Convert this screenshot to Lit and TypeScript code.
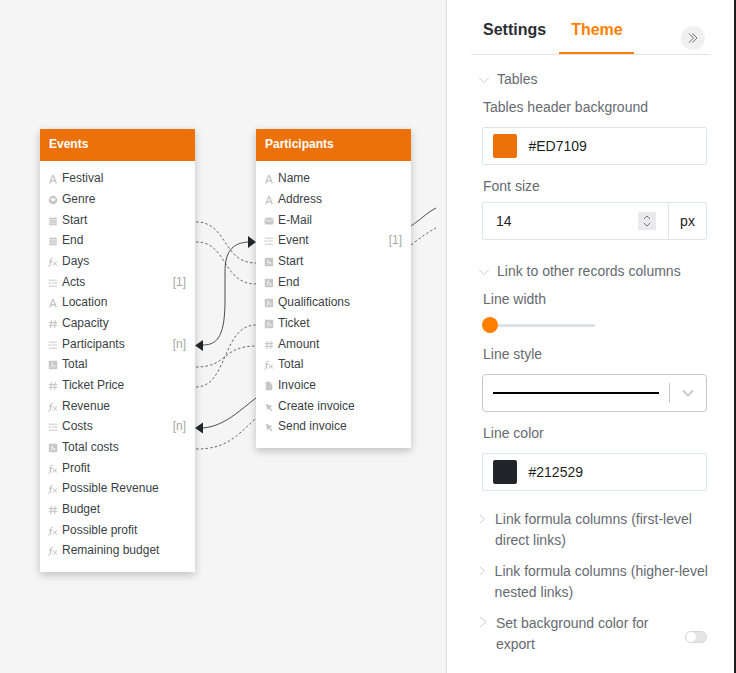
import { LitElement, html, css, svg } from "lit";
import { customElement } from "lit/decorators.js";

type Row = [string, string, string?];

const events: Row[] = [
  ["a", "Festival"], ["s", "Genre"], ["c", "Start"], ["c", "End"], ["f", "Days"],
  ["l", "Acts", "[1]"], ["a", "Location"], ["n", "Capacity"], ["l", "Participants", "[n]"],
  ["q", "Total"], ["n", "Ticket Price"], ["f", "Revenue"], ["l", "Costs", "[n]"],
  ["q", "Total costs"], ["f", "Profit"], ["f", "Possible Revenue"], ["n", "Budget"],
  ["f", "Possible profit"], ["f", "Remaining budget"],
];
const participants: Row[] = [
  ["a", "Name"], ["a", "Address"], ["m", "E-Mail"], ["l", "Event", "[1]"], ["q", "Start"],
  ["q", "End"], ["q", "Qualifications"], ["q", "Ticket"], ["n", "Amount"], ["f", "Total"],
  ["d", "Invoice"], ["b", "Create invoice"], ["b", "Send invoice"],
];

function icon(k: string) {
  const g = "#c6c6c6";
  switch (k) {
    case "a":
      return html`<svg class="ic" viewBox="0 0 10 10"><path d="M1 9.2 4.2 1h1.6L9 9.2H7.4L6.8 7.4H3.2L2.6 9.2ZM3.7 6h2.6L5 2.6Z" fill="${g}" fill-rule="evenodd"/></svg>`;
    case "s":
      return html`<svg class="ic" viewBox="0 0 10 10"><circle cx="5" cy="5" r="4.3" fill="${g}"/><path d="M1.8 3.4h6.4L5 6.8Z" fill="#fff"/></svg>`;
    case "c":
      return html`<svg class="ic" viewBox="0 0 10 10"><path d="M1.2 2h7.6v1.6H1.2ZM1.2 4.3h7.6v5H1.2ZM2.6 1h1v1.4h-1ZM6.4 1h1v1.4h-1Z" fill="${g}"/><path d="M1.2 6h7.6M1.2 7.7h7.6" stroke="#fff" stroke-width=".5"/></svg>`;
    case "f":
      return html`<svg class="ic" viewBox="0 0 10 10"><path d="M4.8 1.2C3.5 1 3.1 1.8 2.9 3L2.1 8C1.9 9 1.4 9.400.3 9.100M1.2 4.100h2.800" fill="none" stroke="#bcbcbc" stroke-width="1"/><path d="M4.800 4.400 9 8.600M9 4.400 4.800 8.600" stroke="#bcbcbc" stroke-width="1"/></svg>`;
    case "l":
      return html`<svg class="ic" viewBox="0 0 10 10"><path d="M.8 2.200h8.400M3.600 5h5.600M.8 8.200h8.400" stroke="#c2c2c2" stroke-width=".9"/><path d="M.8 3.700 2.800 5 .8 6.300Z" fill="#c2c2c2"/></svg>`;
    case "n":
      return html`<svg class="ic" viewBox="0 0 10 10"><path d="M3.400 1 2.800 9M7.200 1 6.600 9M.9 3.600h8.200M.9 6.500h8.200" stroke="${g}" stroke-width="1.100"/></svg>`;
    case "q":
      return html`<svg class="ic" viewBox="0 0 10 10"><rect x=".8" y=".8" width="8.400" height="8.400" rx="1" fill="${g}"/><path d="M5.200 2.400C4.400 2.300 4.200 2.800 4.100 3.400L3.600 6.800C3.500 7.500 3.100 7.700 2.500 7.600M3 4.400h2M5 5 7.400 7.400M7.400 5 5 7.400" fill="none" stroke="#fff" stroke-width=".7"/></svg>`;
    case "m":
      return html`<svg class="ic" viewBox="0 0 10 10"><rect x=".6" y="1.800" width="8.800" height="6.600" rx=".8" fill="${g}"/><path d="M1 3 5 5.600 9 3" fill="none" stroke="#fff" stroke-width=".8"/></svg>`;
    case "d":
      return html`<svg class="ic" viewBox="0 0 10 10"><path d="M1.800.8h4.300l2.100 2.200v6.200H1.800Z" fill="${g}"/><path d="M6 .8V3.200h2.200" fill="#e6e6e6"/></svg>`;
    default:
      return html`<svg class="ic" viewBox="0 0 10 10"><path d="M1.600 1.400 8.600 4.400 6.200 5.400 8.400 8.600 7.400 9.400 5 6.400 3.600 8.600Z" fill="${g}"/></svg>`;
  }
}

const ChevOpen = html`<svg class="chev open" viewBox="0 0 12 12"><path d="M1.200 3.600 6 8.600 10.800 3.600" fill="none" stroke="#cfcfcf" stroke-width="1"/></svg>`;
const ChevSmall = html`<svg class="chev small" viewBox="0 0 12 12"><path d="M3 2 7.600 6 3 10" fill="none" stroke="#cfcfcf" stroke-width="1"/></svg>`;
const ChevBig = html`<svg class="chev big" viewBox="0 0 12 12"><path d="M3 1 9 6 3 11" fill="none" stroke="#cfcfcf" stroke-width="1"/></svg>`;

@customElement("app-root")
export class AppRoot extends LitElement {
  static styles = css`
    :host {
      display: block;
      width: 736px;
      height: 673px;
      overflow: hidden;
      font-family: "Liberation Sans", Arial, sans-serif;
      background: #f5f5f5;
    }
    .page { display: flex; width: 736px; height: 673px; }
    .canvas { position: relative; flex: none; width: 446px; height: 673px; background: #f5f5f5; overflow: hidden; }
    .links { position: absolute; left: 0; top: 0; width: 446px; height: 673px; z-index: 2; pointer-events: none; }
    .table { position: absolute; top: 129px; width: 155px; background: #fff; box-shadow: 0 3px 8px rgba(0,0,0,.22); }
    .t1 { left: 40px; height: 443px; }
    .t2 { left: 256px; height: 319px; }
    .head { height: 32px; background: #ed7109; color: #fff; font-size: 12px; font-weight: 700; line-height: 30px; padding-left: 9px; }
    .rows { padding-top: 7px; display: flex; flex-direction: column; }
    .row { height: 20.672px; flex: none; display: flex; align-items: center; padding: 0 9px 0 8px; font-size: 12px; color: #3b3f45; }
    .ic { width: 10px; height: 10px; flex: none; margin-right: 4px; margin-top: 2px; }
    .name { flex: 1; white-space: nowrap; }
    .tag { color: #a8a8a8; }

    .panel { flex: none; width: 288px; height: 673px; box-sizing: border-box; background: #fff; border-left: 1px solid #dedede; padding: 0 24px 0 24px; color: #666a70; font-size: 14px; }
    .tabs { display: flex; height: 54px; border-bottom: 1px solid #e2e4e8; position: relative; }
    .tab { font-size: 16px; font-weight: 700; color: #2b2e33; padding: 20px 12px 0 12px; box-sizing: border-box; height: 54px; line-height: 20px; }
    .tab.on { color: #ff8000; border-bottom: 2px solid #ff8000; margin-left: 1px; padding-right: 11px; }
    .collapse { position: absolute; right: 5px; top: 26px; width: 24px; height: 24px; border-radius: 50%; background: #f0f0f0; display: flex; align-items: center; justify-content: center; }
    .collapse svg { width: 12px; height: 12px; }

    .sec { display: flex; align-items: flex-start; line-height: 21px; }
    .chev { width: 12px; height: 12px; flex: none; }
    .chev.open { margin: 5px 7px 0 7px; }
    .chev.small { margin: 4px 6px 0 6px; }
    .nudge .chev.small { margin-right: 5.6px; }
    .chev.big { margin: 3px 7px 0 6px; }
    .s1 { margin-top: 14px; }
    .s1b { margin-top: 21px; }
    .s3 { margin-top: 18px; }
    .s3b { margin-top: 10px; }

    .lab { margin: 11px 0 0 12px; line-height: 21px; }
    .lab.tight { margin-top: 7px; }
    .field { margin: 9px 3px 0 11px; height: 38px; box-sizing: border-box; border: 1px solid #e0e4ec; border-radius: 2px; display: flex; align-items: center; padding-left: 10px; color: #1d1f22; }
    .sw { width: 24px; height: 24px; border-radius: 2px; margin-right: 11.5px; }
    .font { margin-top: 5px; padding: 0; }
    .val { flex: 1; padding: 0 12px 0 13px; display: flex; align-items: center; justify-content: space-between; height: 100%; }
    .spin { width: 18px; height: 18px; background: #e9e9ee; display: flex; align-items: center; justify-content: center; }
    .spin svg { width: 12px; height: 16px; }
    .px { width: 38px; flex: none; box-sizing: border-box; height: 100%; border-left: 1px solid #e0e4ec; display: flex; align-items: center; justify-content: center; }
    .slider { margin: 7px 0 0 11px; height: 16px; width: 113px; position: relative; display: flex; align-items: center; }
    .track { width: 100%; height: 3px; background: #dee2e6; }
    .thumb { position: absolute; left: 0; top: 0; width: 16px; height: 16px; border-radius: 50%; background: #ff8000; }
    .select { margin: 9px 3px 0 11px; height: 38px; box-sizing: border-box; border: 1px solid #c8c8c8; border-radius: 4px; display: flex; align-items: center; padding-left: 10px; }
    .line { width: 166px; height: 2px; background: #000; }
    .sep { width: 1px; height: 20px; background: #c8c8c8; margin-left: 10px; }
    .select svg { width: 12px; height: 12px; margin-left: 12px; }
    .export span { flex: 1; }
    .export { align-items: flex-start; }
    .toggle { flex: none; width: 22px; height: 12px; box-sizing: border-box; border: 1px solid #d6d6d6; background: #e4e4e4; border-radius: 6px; position: relative; margin: 18px 3px 0 12px; }
    .toggle i { position: absolute; left: 0; top: 0; width: 10px; height: 10px; border-radius: 50%; background: #fff; }
    .scroll { flex: none; width: 2px; height: 673px; background: #1c1c1e; }
  `;

  private table(cls: string, title: string, rows: Row[]) {
    return html`<div class="table ${cls}">
      <div class="head">${title}</div>
      <div class="rows">
        ${rows.map(
          ([k, n, t]) => html`<div class="row">${icon(k)}<span class="name">${n}</span>${t ? html`<span class="tag">${t}</span>` : ""}</div>`
        )}
      </div>
    </div>`;
  }

  render() {
    const dash = "2.500 2.200";
    return html`<div class="page">
      <div class="canvas">
        ${this.table("t1", "Events", events)}
        ${this.table("t2", "Participants", participants)}
        <svg class="links" viewBox="0 0 446 673">
          ${svg`
            <g fill="none" stroke="#555" stroke-width=".9">
              <path stroke-dasharray="${dash}" d="M196 222C228 222 222 263 256 263"/>
              <path stroke-dasharray="${dash}" d="M196 242C228 242 222 284 256 284"/>
              <path stroke-dasharray="${dash}" d="M196 367C228 367 222 346 256 346"/>
              <path stroke-dasharray="${dash}" d="M196 387C228 387 222 325 256 325"/>
              <path stroke-dasharray="${dash}" d="M196 449C226 449 236 437 256 418"/>
              <path stroke-dasharray="${dash}" d="M411 245C420 238 428 232 436 228"/>
              <path stroke="#3a3a3a" d="M411 226C420 220 428 212 436 208"/>
              <path stroke="#3a3a3a" d="M203 345C218 345 225 335 225 300V272C225 252 232 243 248 242"/>
              <path stroke="#3a3a3a" d="M203 428C225 426 240 410 256 398"/>
            </g>
            <path d="M195 345.500L203 340V351Z M195 428L203 422.500V433.500Z M256 242L248 236V248Z" fill="#212529"/>
          `}
        </svg>
      </div>
      <div class="panel">
        <div class="tabs">
          <div class="tab">Settings</div>
          <div class="tab on">Theme</div>
          <div class="collapse"><svg viewBox="0 0 12 12"><path d="M2 1.500 6.500 6 2 10.500M5.500 1.500 10 6 5.500 10.500" fill="none" stroke="#6c6c6c" stroke-width="1"/></svg></div>
        </div>
        <div class="sec s1">${ChevOpen}<span>Tables</span></div>
        <div class="lab tight">Tables header background</div>
        <div class="field"><div class="sw" style="background:#ED7109"></div>#ED7109</div>
        <div class="lab">Font size</div>
        <div class="field font">
          <div class="val">14<div class="spin"><svg viewBox="0 0 12 16"><path d="M3 6 6 3 9 6M3 10 6 13 9 10" fill="none" stroke="#777" stroke-width="1"/></svg></div></div>
          <div class="px">px</div>
        </div>
        <div class="sec s1b">${ChevOpen}<span>Link to other records columns</span></div>
        <div class="lab tight">Line width</div>
        <div class="slider"><div class="track"></div><div class="thumb"></div></div>
        <div class="lab">Line style</div>
        <div class="select"><div class="line"></div><div class="sep"></div>
          <svg viewBox="0 0 12 12"><path d="M1 3.500 6 8.500 11 3.500" fill="none" stroke="#cccccc" stroke-width="2"/></svg>
        </div>
        <div class="lab">Line color</div>
        <div class="field"><div class="sw" style="background:#212529"></div>#212529</div>
        <div class="sec s3">${ChevSmall}<span>Link formula columns (first-level direct links)</span></div>
        <div class="sec s3b nudge">${ChevSmall}<span>Link formula columns (higher-level nested links)</span></div>
        <div class="sec s3b export">${ChevBig}<span>Set background color for export</span><div class="toggle"><i></i></div></div>
      </div>
      <div class="scroll"></div>
    </div>`;
  }
}
